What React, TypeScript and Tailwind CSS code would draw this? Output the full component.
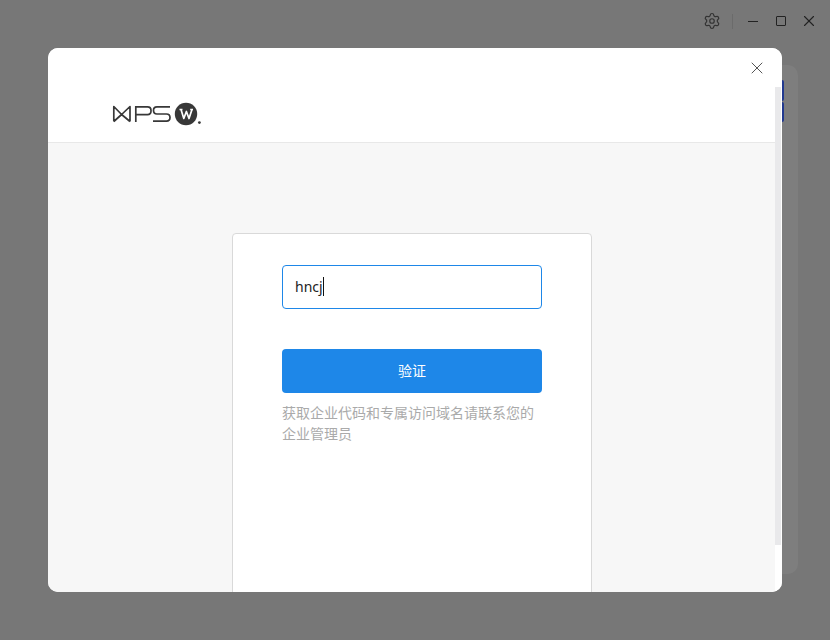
import React from 'react';
import { Settings, X } from 'lucide-react';

const font = "font-['Noto_Sans','Noto_Sans_CJK_SC',sans-serif]";

const Logo = () => (
  <svg width="92" height="32" viewBox="0 0 92 32" fill="none" className="block">
    {/* W mark */}
    <path d="M1.8 26.5V11.5L9.6 19.5L1.8 26.5M18 26.5V11.5L9.6 19.5L18 26.5" stroke="#383838" strokeWidth="1.7" strokeLinejoin="round" />
    {/* P */}
    <path d="M23.8 27V11.8H35.5Q39 11.8 39 15.3V16Q39 19.6 35.5 19.6H24.5" stroke="#383838" strokeWidth="1.7" />
    {/* S */}
    <path d="M58 11.8H45Q41.5 11.8 41.5 15.3Q41.5 19 45 19H54.5Q58 19 58 22.6Q58 26.2 54.5 26.2H41" stroke="#383838" strokeWidth="1.7" />
    <circle cx="74" cy="19" r="11.2" fill="#383838" />
    <path d="M67.5 14.5H70.5M69 14.5L71.8 23.5L74.4 16.5L77 23.5L80 14.5M78.2 14.5H81" stroke="#fff" strokeWidth="1.7" strokeLinejoin="round" />
    <circle cx="87.4" cy="27.6" r="1.4" fill="#383838" />
  </svg>
);

const App: React.FC = () => {
  return (
    <div className={`relative w-[830px] h-[640px] overflow-hidden bg-[#777777] ${font}`}>
      {/* Window controls */}
      <div className="flex h-[42px] items-center justify-end pr-[12px] text-[#333333]">
        <Settings className="w-[18px] h-[18px] mr-[11px]" strokeWidth={1.6} />
        <div className="w-px h-[15px] bg-[#6b6b6b] mr-[15px]"></div>
        <div className="w-[10px] h-px bg-[#222222] mr-[18px]"></div>
        <div className="w-[10px] h-[10px] border border-[#222222] rounded-[1px] mr-[14px]"></div>
        <X className="w-[18px] h-[18px] text-[#222222]" strokeWidth={1.5} />
      </div>

      {/* Page behind the dialog */}
      <div className="absolute left-[700px] top-[65px] w-[98px] h-[509px] bg-[#7e7e7e] rounded-[10px]"></div>
      <div className="absolute left-[770px] top-[80px] w-[14px] h-[21px] bg-[#22398f] rounded-[2px]"></div>
      <div className="absolute left-[770px] top-[102px] w-[14px] h-[20px] bg-[#22398f] rounded-[2px]"></div>

      {/* Dialog */}
      <div className="absolute left-[48px] top-[48px] w-[734px] h-[544px] bg-white rounded-[10px] overflow-hidden flex">
        <div className="w-[727px] flex flex-col">
          <div className="relative h-[95px] shrink-0 border-b border-[#e8e8e8] bg-white pl-[64px] pt-[47px]">
            <Logo />
          </div>
          <div className="flex-1 bg-[#f7f7f7] flex justify-center pt-[90px] pl-[1px] overflow-hidden">
            <div className="w-[360px] h-[400px] shrink-0 bg-white border border-[#d9d9d9] rounded-[4px] pt-[31px] px-[49px]">
              <div className="h-[44px] w-[260px] rounded-[4px] border border-[#1e87e8] bg-white flex items-center pl-[12px] pb-[2px] text-[14px] text-[#222222]">
                hncj<span className="w-px h-[19px] bg-[#111111]"></span>
              </div>
              <div className="mt-[40px] h-[44px] w-[260px] rounded-[4px] bg-[#1e87e8] text-white text-[14px] pb-[2px] flex items-center justify-center">
                验证
              </div>
              <p className="mt-[9px] w-[260px] text-[14px] leading-[21px] text-[#aaaaaa]">
                获取企业代码和专属访问域名请联系您的企业管理员
              </p>
            </div>
          </div>
        </div>
        {/* Scrollbar */}
        <div className="w-[7px] bg-white pt-[39px]">
          <div className="w-[6px] h-[458px] bg-[#e9e9eb]"></div>
        </div>
        <X className="absolute right-[15px] top-[10px] w-[20px] h-[20px] text-[#555555]" strokeWidth={1.2} />
      </div>
    </div>
  );
};

export default App;
